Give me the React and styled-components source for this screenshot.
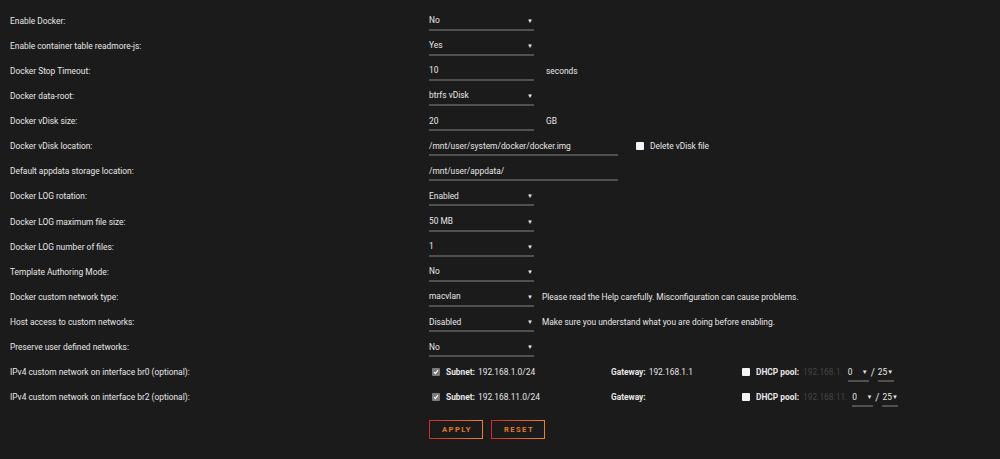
import React from "react";
import styled, { createGlobalStyle } from "styled-components";

const Global = createGlobalStyle`
  html, body { margin: 0; padding: 0; background: #1c1b1b; }
  body {
    font-family: Roboto, "Open Sans", sans-serif;
    font-size: 8.4px;
    color: #e6e6e6;
  }
`;

const Page = styled.div`
  width: 1000px;
  min-height: 459px;
  box-sizing: border-box;
  padding: 8px 0 0 10px;
  background: #1c1b1b;
`;

const Row = styled.div`
  display: grid;
  grid-template-columns: 419px 1fr;
  align-items: center;
  height: 25.13px;
`;

const Label = styled.div`
  white-space: nowrap;
`;

const Field = styled.div`
  display: flex;
  align-items: center;
  gap: ${(p) => p.$gap ?? 8}px;
`;

const Select = styled.div`
  display: flex;
  justify-content: space-between;
  align-items: center;
  box-sizing: border-box;
  flex: none;
  width: ${(p) => p.$w || 105}px;
  height: 20px;
  padding: 1px 1px 0 0;
  border-bottom: 2px solid #505050;
  white-space: nowrap;
`;

const Arrow = styled.span`
  font-size: 6px;
  color: #e6e6e6;
`;

const TextInput = styled.div`
  display: flex;
  align-items: center;
  box-sizing: border-box;
  flex: none;
  width: ${(p) => p.$w || 105}px;
  height: 20px;
  padding-top: 1px;
  border-bottom: 2px solid #505050;
  white-space: nowrap;
`;

const Unit = styled.span`
  margin-left: ${(p) => p.$ml || 0}px;
  white-space: nowrap;
`;

const Box = styled.span`
  display: inline-flex;
  align-items: center;
  justify-content: center;
  width: 8px;
  height: 8px;
  border-radius: 1px;
  background: ${(p) => (p.$checked ? "#7b7b7b" : "#f4f4f4")};
  flex: none;
`;

const CheckLabel = styled.span`
  display: inline-flex;
  align-items: center;
  gap: 6px;
  margin-left: ${(p) => p.$ml || 0}px;
  white-space: nowrap;
`;

const Bold = styled.b`
  font-weight: 700;
  margin-right: 3px;
`;

const Group = styled.div`
  display: flex;
  align-items: center;
  flex: none;
  width: ${(p) => (p.$w ? p.$w + "px" : "auto")};
  padding-left: ${(p) => p.$pl || 0}px;
  box-sizing: border-box;
  white-space: nowrap;
`;

const Dim = styled.span`
  color: #444;
  margin: 0 5px 0 1px;
`;

const Slash = styled.span`
  margin: 0 3px 0 2px;
  font-size: 10px;
`;

const Buttons = styled.div`
  display: flex;
  gap: 8px;
  padding: 10px 0 0 419px;
`;

const Button = styled.button`
  box-sizing: border-box;
  width: 54px;
  height: 19px;
  background: transparent;
  border: 1px solid transparent;
  border-image: linear-gradient(90deg, #d42a2a, #e8832e) 1;
  color: #e57a2c;
  font-family: Roboto, "Open Sans", sans-serif;
  font-size: 7.5px;
  font-weight: 700;
  letter-spacing: 1.5px;
  padding: 0 0 0 2px;
  cursor: pointer;
`;

function Check({ checked }) {
  return (
    <Box $checked={checked}>
      {checked && (
        <svg width="6" height="6" viewBox="0 0 6 6">
          <path d="M1 3.2 L2.4 4.6 L5 1.2" stroke="#fff" strokeWidth="1.1" fill="none" />
        </svg>
      )}
    </Box>
  );
}

function Sel({ value, w }) {
  return (
    <Select $w={w}>
      <span>{value}</span>
      <Arrow>▼</Arrow>
    </Select>
  );
}

function Network({ label, subnet, gateway, prefix }) {
  return (
    <Row>
      <Label>{label}</Label>
      <Field $gap={0}>
        <Group $w={182} $pl={3}>
          <CheckLabel>
            <Check checked />
            <span><Bold>Subnet:</Bold>{subnet}</span>
          </CheckLabel>
        </Group>
        <Group $w={131}>
          <Bold>Gateway:</Bold>{gateway}
        </Group>
        <Group>
          <CheckLabel>
            <Check />
            <Bold>DHCP pool:</Bold>
          </CheckLabel>
          <Dim>{prefix}</Dim>
          <Sel value="0" w={21} />
          <Slash>/</Slash>
          <Sel value="25" w={16} />
        </Group>
      </Field>
    </Row>
  );
}

function SelectRow({ label, value, hint }) {
  return (
    <Row>
      <Label>{label}</Label>
      <Field>
        <Sel value={value} />
        {hint && <span>{hint}</span>}
      </Field>
    </Row>
  );
}

export default function App() {
  return (
    <>
      <Global />
      <Page>
        <SelectRow label="Enable Docker:" value="No" />
        <SelectRow label="Enable container table readmore-js:" value="Yes" />
        <Row>
          <Label>Docker Stop Timeout:</Label>
          <Field>
            <TextInput>10</TextInput>
            <Unit $ml={4}>seconds</Unit>
          </Field>
        </Row>
        <SelectRow label="Docker data-root:" value="btrfs vDisk" />
        <Row>
          <Label>Docker vDisk size:</Label>
          <Field>
            <TextInput>20</TextInput>
            <Unit $ml={4}>GB</Unit>
          </Field>
        </Row>
        <Row>
          <Label>Docker vDisk location:</Label>
          <Field>
            <TextInput $w={189}>/mnt/user/system/docker/docker.img</TextInput>
            <CheckLabel $ml={10}>
              <Check />
              Delete vDisk file
            </CheckLabel>
          </Field>
        </Row>
        <Row>
          <Label>Default appdata storage location:</Label>
          <Field>
            <TextInput $w={189}>/mnt/user/appdata/</TextInput>
          </Field>
        </Row>
        <SelectRow label="Docker LOG rotation:" value="Enabled" />
        <SelectRow label="Docker LOG maximum file size:" value="50 MB" />
        <SelectRow label="Docker LOG number of files:" value="1" />
        <SelectRow label="Template Authoring Mode:" value="No" />
        <SelectRow
          label="Docker custom network type:"
          value="macvlan"
          hint="Please read the Help carefully. Misconfiguration can cause problems."
        />
        <SelectRow
          label="Host access to custom networks:"
          value="Disabled"
          hint="Make sure you understand what you are doing before enabling."
        />
        <SelectRow label="Preserve user defined networks:" value="No" />
        <Network
          label="IPv4 custom network on interface br0 (optional):"
          subnet="192.168.1.0/24"
          gateway="192.168.1.1"
          prefix="192.168.1."
        />
        <Network
          label="IPv4 custom network on interface br2 (optional):"
          subnet="192.168.11.0/24"
          gateway=""
          prefix="192.168.11."
        />
        <Buttons>
          <Button>APPLY</Button>
          <Button>RESET</Button>
        </Buttons>
      </Page>
    </>
  );
}
